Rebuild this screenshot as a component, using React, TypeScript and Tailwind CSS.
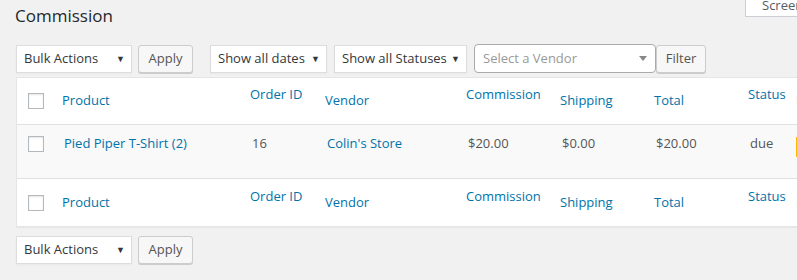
import React from 'react';

const font = { fontFamily: '"Open Sans", "Noto Sans", sans-serif' };

const Checkbox = () => (
    <span className="block w-4 h-4 bg-white border border-[#b4b9be] shadow-[inset_0_1px_2px_rgba(0,0,0,0.1)]" />
);

const Select = ({ label, width }: { label: string; width: string }) => (
    <div className={`flex items-center justify-between h-7 pl-[7px] pr-[6px] whitespace-nowrap bg-white border border-[#ddd] shadow-[0_1px_2px_rgba(0,0,0,0.04)] text-[13px] text-[#32373c] ${width}`}>
        <span>{label}</span>
        <span className="text-[9px] text-[#32373c]">▼</span>
    </div>
);

const Button = ({ label, width }: { label: string; width: string }) => (
    <button className={`h-7 rounded-[3px] border border-[#ccc] bg-[#f7f7f7] shadow-[0_1px_0_#ccc] text-[13px] text-[#555] ${width}`}>
        {label}
    </button>
);

class Column {
    constructor(
        public label: string,
        public sortable: boolean
    ) { }
};

const columns = [
    new Column('Product', false),
    new Column('Order ID', true),
    new Column('Vendor', false),
    new Column('Commission', true),
    new Column('Shipping', false),
    new Column('Total', false),
    new Column('Status', true),
    new Column('Date', false),
];

const grid = 'grid grid-cols-[37px_188px_75px_141px_94px_94px_94px_48px_60px]';

const HeaderRow = ({ border }: { border: string }) => (
    <div className={`${grid} h-[47px] ${border} border-[#e1e1e1]`}>
        <div className="flex items-center pl-[11px]">
            <Checkbox />
        </div>
        {columns.map(col =>
            <div
                className={`flex items-center pl-2 whitespace-nowrap text-[13px] text-[#0073aa] ${col.sortable ? 'pb-3' : ''}`}
                key={col.label}
            >
                {col.label}
            </div>
        )}
    </div>
);

const cells = ['16', "Colin's Store", '$20.00', '$0.00', '$20.00', 'due'];

export default function App() {
    return (
        <div className="w-[797px] h-[280px] overflow-hidden bg-[#f1f1f1]" style={font}>
            <div className="flex justify-between items-start">
                <h1 className="pl-[15px] pt-[4px] text-[17px] leading-[24px] text-[#23282d]">Commission</h1>
                <div className="-mt-[7px] -mr-[60px] w-[112px] h-[24px] pl-4 pt-[1px] bg-white border border-[#ccd0d4] text-[13px] leading-[20px] text-[#555d66]">
                    Screen Options
                </div>
            </div>

            <div className="flex items-center mt-[17px] pl-4 h-7">
                <Select label="Bulk Actions" width="w-[116px]" />
                <div className="ml-[6px]"><Button label="Apply" width="w-[55px]" /></div>
                <div className="ml-[17px]"><Select label="Show all dates" width="w-[117px]" /></div>
                <div className="ml-[7px]"><Select label="Show all Statuses" width="w-[133px]" /></div>
                <div className="ml-[7px] flex items-center justify-between w-[182px] h-[29px] -mt-[1px] pl-2 pr-[8px] whitespace-nowrap bg-white border border-[#aaa] rounded-[4px] text-[13px] text-[#999]">
                    <span>Select a Vendor</span>
                    <span className="w-0 h-0 border-t-[5px] border-t-[#888] border-x-[4px] border-x-transparent" />
                </div>
                <Button label="Filter" width="w-[50px]" />
            </div>

            <div className="mt-[4px] ml-4 w-[850px] bg-white border border-[#e5e5e5] shadow-[0_1px_1px_rgba(0,0,0,0.04)]">
                <HeaderRow border="border-b" />
                <div className={`${grid} h-[54px] bg-[#f9f9f9] border-b border-[#e1e1e1] text-[13px]`}>
                    <div className="pl-[11px] pt-[11px]">
                        <Checkbox />
                    </div>
                    <div className="pl-[10px] pt-[8px] leading-[20px] whitespace-nowrap text-[#0073aa]">Pied Piper T-Shirt (2)</div>
                    {cells.map((c, i) =>
                        <div
                            className={`pl-[10px] pt-[8px] leading-[20px] whitespace-nowrap ${i == 1 ? 'text-[#0073aa]' : 'text-[#555]'}`}
                            key={i}
                        >
                            {c}
                        </div>
                    )}
                    <div className="pl-2 pt-[12px]">
                        <span className="block w-[3px] h-[20px] bg-[#ffb900]" />
                    </div>
                </div>
                <HeaderRow border="" />
            </div>

            <div className="flex items-center mt-[9px] pl-4 h-7">
                <Select label="Bulk Actions" width="w-[116px]" />
                <div className="ml-[6px]"><Button label="Apply" width="w-[55px]" /></div>
            </div>
        </div>
    );
}
